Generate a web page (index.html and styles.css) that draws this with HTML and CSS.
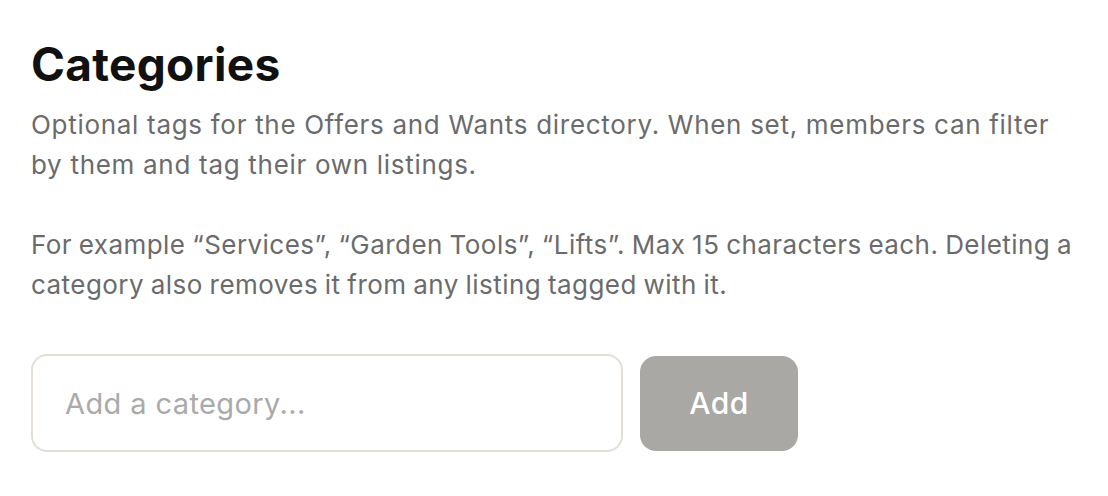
FILE: index.html
```html
<!DOCTYPE html>
<html lang="en">
<head>
  <meta charset="UTF-8">
  <title>Categories</title>
  <meta name="viewport" content="width=device-width, initial-scale=1.0">
  <link rel="stylesheet" href="styles.css">
</head>
<body>
  <section class="categories">
    <h2 class="categories-title">Categories</h2>
    <p class="categories-text">Optional tags for the Offers and Wants directory. When set, members can filter by them and tag their own listings.</p>
    <p class="categories-text categories-note">For example “Services”, “Garden Tools”, “Lifts”. Max 15 characters each. Deleting a category also removes it from any listing tagged with it.</p>
    <form class="category-form">
      <input class="category-input" type="text" placeholder="Add a category...">
      <button class="category-add" type="submit" disabled>Add</button>
    </form>
  </section>
</body>
</html>
```

FILE: styles.css
```css
html, body {
  margin: 0;
  padding: 0;
  background: #fff;
  font-family: Inter, 'Noto Sans', sans-serif;
}
.categories {
  padding: 39px 0 0 31px;
  width: 1050px;
}
.categories-title {
  margin: 0 0 16px 0;
  font-size: 46px;
  font-weight: 700;
  letter-spacing: 0.3px;
  color: #111;
  line-height: 50px;
}
.categories-text {
  margin: 0 0 40px 0;
  font-size: 26px;
  letter-spacing: 0.7px;
  line-height: 40px;
  color: #6b6b6b;
}
.categories-note {
  margin-bottom: 0;
  letter-spacing: 0.45px;
  word-spacing: -1px;
}
.category-form {
  display: flex;
  align-items: center;
  gap: 17px;
  margin-top: 49px;
}
.category-input {
  box-sizing: border-box;
  width: 592px;
  height: 98px;
  border: 2px solid #e3dfd8;
  border-radius: 16px;
  padding: 0 32px;
  font-family: inherit;
  font-size: 29px;
  letter-spacing: 0.4px;
  color: #333;
  outline: none;
}
.category-input::placeholder {
  color: #aaa;
}
.category-add {
  width: 158px;
  height: 95px;
  border: none;
  border-radius: 16px;
  background: #a9a8a4;
  color: #fff;
  font-family: inherit;
  font-size: 30px;
  font-weight: 500;
  letter-spacing: 0.5px;
}
```
